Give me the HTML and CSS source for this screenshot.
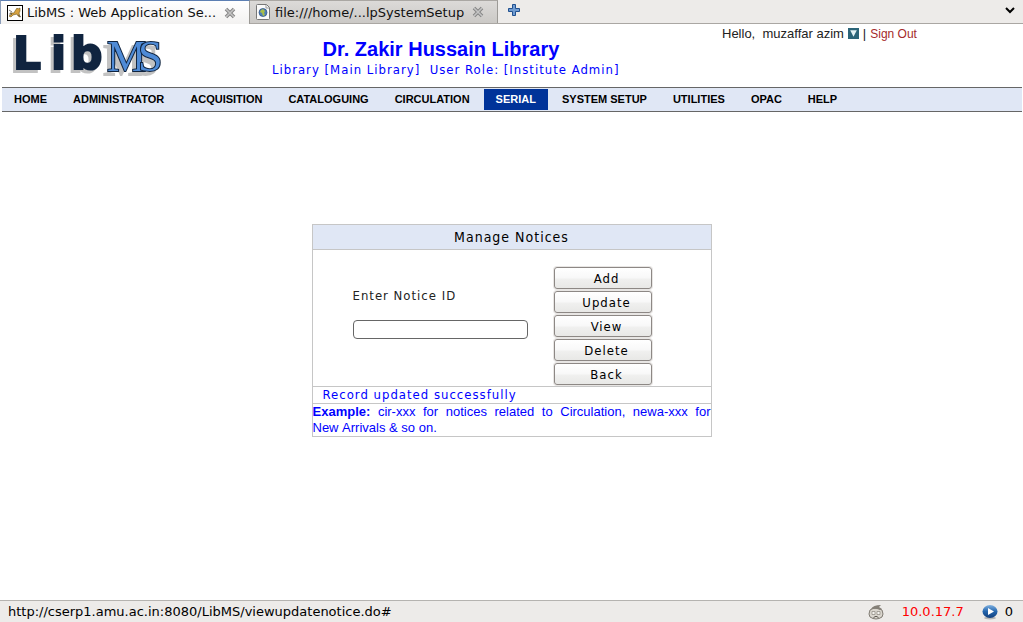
FILE: index.html
```html
<!DOCTYPE html>
<html lang="en">
<head>
<meta charset="utf-8">
<title>LibMS : Web Application Server</title>
<link rel="stylesheet" href="styles.css">
</head>
<body>
<div class="tabs">
  <div class="tab tab-active">
    <svg class="icon16" viewBox="0 0 16 16" aria-hidden="true"><rect x=".5" y=".5" width="15" height="15" fill="#fff" stroke="#000"/><path d="M2 11l3-2-2-1 4 0 1-2 2-3 1 1 2-1 0 3-1 2 1 4-2-1-1-2-4 1-2 2z" fill="#d9a441" stroke="#6b5014" stroke-width=".6"/><path d="M2 5l3 2M2 9l3 0M11 10l3 2" stroke="#444" stroke-width=".7"/></svg>
    <span class="tab-title">LibMS : Web Application Se...</span>
    <button class="close" aria-label="Close tab"><svg viewBox="0 0 12 12"><path d="M2 2l8 8M10 2l-8 8" stroke="#858585" stroke-width="3.6"/><path d="M2 2l8 8M10 2l-8 8" stroke="#c4c4c4" stroke-width="1.6"/></svg></button>
  </div>
  <div class="tab tab-back">
    <svg class="icon16" viewBox="0 0 16 16" aria-hidden="true"><path d="M1.500 1.500q0-1 1-1h9l3 3v11q0 1-1 1h-11q-1 0-1-1z" fill="#fafafa" stroke="#777"/><path d="M11 1v3h3" fill="none" stroke="#999"/><circle cx="8" cy="8.500" r="4" fill="#4f7fb8" stroke="#2c4f80" stroke-width=".7"/><path d="M6 6l2-1 2 2-1 2 1 2-2 1-1-3-2-1z" fill="#a8bd48"/></svg>
    <span class="tab-title">file:///home/...lpSystemSetup</span>
    <button class="close" aria-label="Close tab"><svg viewBox="0 0 12 12"><path d="M2 2l8 8M10 2l-8 8" stroke="#858585" stroke-width="3.6"/><path d="M2 2l8 8M10 2l-8 8" stroke="#c4c4c4" stroke-width="1.6"/></svg></button>
  </div>
  <button class="new-tab" aria-label="New tab"><svg viewBox="0 0 12 12"><path d="M4.500.5h3v4h4v3h-4v4h-3v-4h-4v-3h4z" fill="#6f9bd1" stroke="#20508f"/></svg></button>
  <button class="list-tabs" aria-label="List all tabs"><svg viewBox="0 0 12 12"><path d="M2 4l4 4 4-4" fill="none" stroke="#000" stroke-width="2"/></svg></button>
</div>

<header class="header">
  <svg class="logo" viewBox="0 0 170 56" role="img" aria-label="LibMS">
    <text class="logo-lib" x="13 51 71" y="40">Lib</text>
    <text class="logo-ms" x="107 138" y="42">MS</text>
  </svg>
  <div class="heading">
    <h1>Dr. Zakir Hussain Library</h1>
    <p class="role">&nbsp;&nbsp;Library [Main Library]&nbsp; User Role: [Institute Admin]</p>
  </div>
  <div class="account">
    <span>Hello,&nbsp; muzaffar azim</span>
    <button class="drop" aria-label="Account menu"><svg viewBox="0 0 10 10"><rect width="10" height="10" fill="#2b6478"/><path d="M2 2h6l-3 6z" fill="#e4f2f5"/></svg></button>
    <span>|</span>
    <a class="sign-out" href="#">Sign Out</a>
  </div>
</header>

<nav class="nav">
  <a href="#">HOME</a><a href="#">ADMINISTRATOR</a><a href="#">ACQUISITION</a><a href="#">CATALOGUING</a><a href="#">CIRCULATION</a><a class="current" href="#">SERIAL</a><a href="#">SYSTEM SETUP</a><a href="#">UTILITIES</a><a href="#">OPAC</a><a href="#">HELP</a>
</nav>

<main class="main">
  <form class="card">
    <h2>Manage Notices</h2>
    <div class="card-body">
      <div class="field">
        <label for="notice">Enter Notice ID</label>
        <input id="notice" type="text">
      </div>
      <div class="actions">
        <button type="button">Add</button>
        <button type="button">Update</button>
        <button type="button">View</button>
        <button type="button">Delete</button>
        <button type="button">Back</button>
      </div>
    </div>
    <p class="message">Record updated successfully</p>
    <p class="example"><b>Example:</b> cir-xxx for notices related to Circulation, newa-xxx for New&nbsp;Arrivals &amp; so on.</p>
  </form>
</main>

<footer class="status">
  <span class="url">http://cserp1.amu.ac.in:8080/LibMS/viewupdatenotice.do#</span>
  <svg class="icon16" viewBox="0 0 16 16" aria-hidden="true"><path d="M2 6Q8 2 14 6l1 4-1 3q-6 4-12 0l-1-3z" fill="#dad6ce" stroke="#7f7a72"/><path d="M3 5Q5 1 13 1l-2 2 3 2-2 1q-4-2-9-1z" fill="#858078"/><path d="M4 7.500h3v3h-3zM9 7.500h3v3h-3z" fill="#f6f4f0" stroke="#8b867e" stroke-width=".7"/><path d="M5.500 13.500q2.500-2.500 5 0" fill="none" stroke="#5e5a53"/></svg>
  <span class="ip">10.0.17.7</span>
  <svg class="icon16" viewBox="0 0 16 16" aria-hidden="true"><defs><linearGradient id="ball" x2="0" y2="1"><stop offset="0" stop-color="#7fb0df"/><stop offset=".5" stop-color="#2465ad"/><stop offset="1" stop-color="#123f7d"/></linearGradient></defs><ellipse cx="8" cy="14" rx="6" ry="1.500" fill="#b5b5b5"/><ellipse cx="8" cy="7.500" rx="7.500" ry="6.500" fill="url(#ball)"/><path d="M6 4l6 3.500-6 3.500z" fill="#fff"/></svg>
  <span class="count">0</span>
</footer>
</body>
</html>
```

FILE: styles.css
```css
* { box-sizing: border-box; }
body {
  margin: 0;
  min-height: 100vh;
  display: flex;
  flex-direction: column;
  background: #fff;
  color: #222;
  font-family: "Liberation Sans", Arial, sans-serif;
  font-size: 13px;
}
h1, h2, p { margin: 0; font-weight: normal; }
button { font: inherit; color: #000; }
a { text-decoration: none; }
svg { display: block; }
.icon16 { width: 16px; height: 16px; flex: none; }

.tabs {
  display: flex;
  height: 24px;
  background: #edebe9;
  border-bottom: 1px solid #aaa7a3;
  font-family: "DejaVu Sans", sans-serif;
  font-size: 13px;
  color: #111;
}
.tab {
  display: flex;
  align-items: center;
  width: 248px;
  padding: 0 13px 0 5px;
  gap: 4px;
  border-right: 1px solid #9c9a96;
  white-space: nowrap;
}
.tab-active {
  width: 250px;
  height: 24px;
  padding-left: 6px;
  background: linear-gradient(#fff, #f3f2f1);
  border-top: 1px solid #5d7fb3;
  border-left: 1px solid #8a9cb8;
}
.tab-back { background: linear-gradient(#dcdad8, #cbc9c6); border-top: 1px solid #aaa7a3; }
.tab-title { flex: 1; }
.close, .new-tab, .list-tabs, .drop {
  flex: none;
  padding: 0;
  border: 0;
  background: none;
  width: 12px;
  height: 12px;
}
.new-tab { margin: 4px 0 0 10px; }
.list-tabs { margin: 4px 7px 0 auto; }

.header {
  display: grid;
  grid-template-columns: minmax(0, 160fr) minmax(0, 562fr) minmax(0, 301fr);
  height: 63px;
}
.logo { width: 170px; height: 56px; margin-top: 5px; }
.logo-lib {
  font: bold 44px "DejaVu Sans", sans-serif;
  fill: #10243f;
  stroke: #10243f;
  stroke-width: 2px;
  filter: drop-shadow(-3px 3px 0 #c2c2c2);
}
.logo-ms {
  font: 44px "Liberation Serif", serif;
  fill: #4f8bd6;
  stroke: #10243f;
  stroke-width: 2px;
  paint-order: stroke;
  filter: drop-shadow(-4px 4px 0 #c2c2c2);
}
.heading { padding-top: 14px; text-align: center; color: #00f; }
.heading h1 { font-size: 20px; line-height: 22px; font-weight: bold; }
.role {
  font: 13px/20px "DejaVu Sans Condensed", "DejaVu Sans", sans-serif;
  letter-spacing: 1px;
  white-space: nowrap;
}
.account { display: flex; gap: 4px; line-height: 20px; white-space: nowrap; }
.drop { width: 11px; height: 11px; margin-top: 4px; }
.sign-out { color: #a52a2a; font-size: 12px; }

.nav {
  display: flex;
  gap: 2px;
  margin: 0 1px 0 2px;
  height: 25px;
  padding: 1px 0;
  background: #e0e7f5;
  border: solid #666;
  border-width: 1px 0;
  font-size: 11px;
  font-weight: bold;
  line-height: 21px;
}
.nav a { padding: 0 12px; color: #000; }
.nav .current { background: #039; color: #fff; }

.main { flex: 1; display: flex; justify-content: center; align-items: flex-start; padding-top: 112px; }
.card {
  width: 400px;
  border: 1px solid #c6c6c6;
  font-family: "DejaVu Sans Condensed", "DejaVu Sans", sans-serif;
  font-size: 13px;
}
.card h2 {
  padding-top: 1px;
  background: #e0e7f5;
  border-bottom: 1px solid #c6c6c6;
  color: #000;
  font-size: 14px;
  line-height: 23px;
  letter-spacing: 1px;
  text-align: center;
}
.card-body { display: flex; gap: 26px; padding: 17px 40px 1px; }
.field { display: flex; flex-direction: column; gap: 16px; padding-top: 21px; }
.field label { line-height: 16px; letter-spacing: 1px; }
.field input {
  width: 175px;
  height: 19px;
  border: 1px solid #666;
  border-radius: 4px;
  background: #fff;
}
.actions { display: flex; flex-direction: column; gap: 2px; }
.actions button {
  width: 98px;
  height: 22px;
  padding: 0 0 0 8px;
  border: 1px solid #8d8885;
  border-radius: 3px;
  box-shadow: 0 0 0 1px #e8e6e4;
  background: linear-gradient(#fff, #f8f8f8 50%, #f0f0ef 55%, #e8e8e6);
  letter-spacing: 1px;
}
.message {
  border: solid #c6c6c6;
  border-width: 1px 0;
  padding-left: 10px;
  color: #00f;
  line-height: 16px;
  letter-spacing: 1px;
}
.example {
  color: #00f;
  font: 13px/16px "Liberation Sans", Arial, sans-serif;
  text-align: justify;
}

.status {
  display: flex;
  align-items: center;
  height: 22px;
  padding: 0 10px 0 8px;
  background: #edebe9;
  border-top: 1px solid #b5b3b0;
  font-family: "DejaVu Sans", sans-serif;
  font-size: 13px;
  color: #000;
}
.url { flex: 1; }
.ip { margin: 0 18px; color: #f00; }
.count { margin-left: 7px; }
```
